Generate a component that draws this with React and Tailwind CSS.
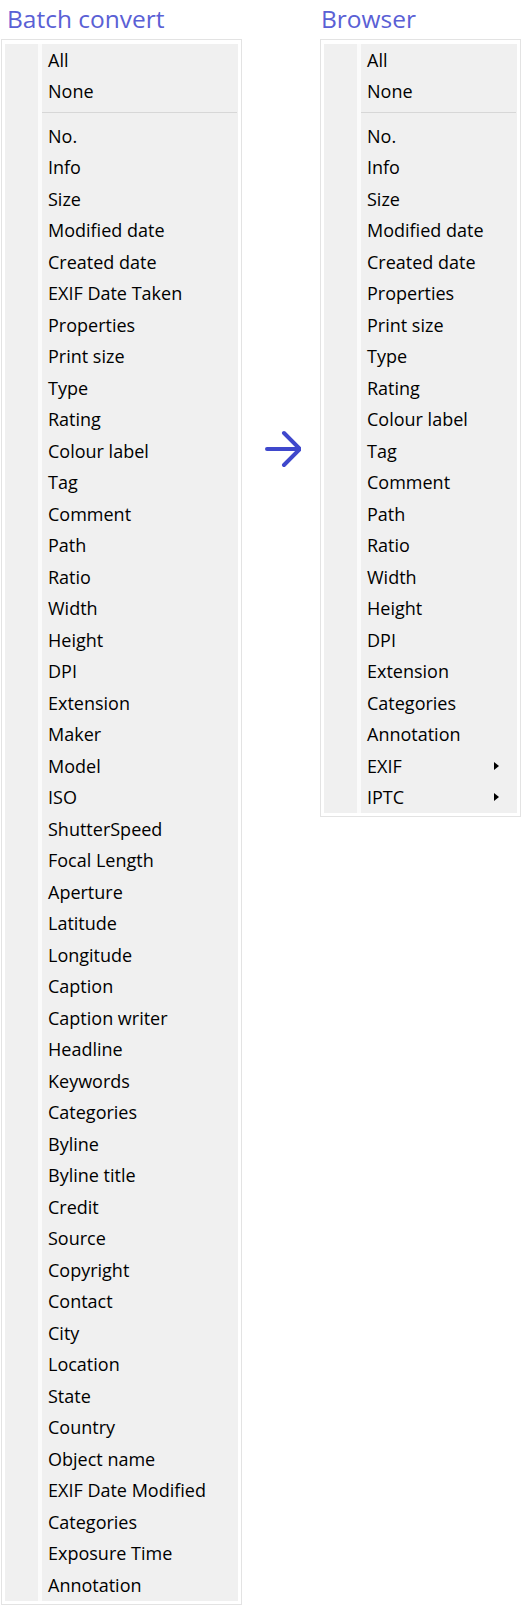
// Column chooser comparison: Batch convert vs Browser context menus

const batchItems = [
  'No.', 'Info', 'Size', 'Modified date', 'Created date', 'EXIF Date Taken',
  'Properties', 'Print size', 'Type', 'Rating', 'Colour label', 'Tag', 'Comment',
  'Path', 'Ratio', 'Width', 'Height', 'DPI', 'Extension', 'Maker', 'Model', 'ISO',
  'ShutterSpeed', 'Focal Length', 'Aperture', 'Latitude', 'Longitude', 'Caption',
  'Caption writer', 'Headline', 'Keywords', 'Categories', 'Byline', 'Byline title',
  'Credit', 'Source', 'Copyright', 'Contact', 'City', 'Location', 'State', 'Country',
  'Object name', 'EXIF Date Modified', 'Categories', 'Exposure Time', 'Annotation',
]

const browserItems = [
  'No.', 'Info', 'Size', 'Modified date', 'Created date', 'Properties', 'Print size',
  'Type', 'Rating', 'Colour label', 'Tag', 'Comment', 'Path', 'Ratio', 'Width',
  'Height', 'DPI', 'Extension', 'Categories', 'Annotation',
  { label: 'EXIF', sub: true },
  { label: 'IPTC', sub: true },
]

function MenuRow({ item }) {
  const label = typeof item === 'string' ? item : item.label
  const sub = typeof item !== 'string' && item.sub
  return (
    <div className="flex h-[31.5px] items-center justify-between pl-[6px] pr-[18px]">
      <span className="leading-none">{label}</span>
      {sub && (
        <span className="block h-0 w-0 border-y-[4.5px] border-l-[5px] border-y-transparent border-l-black" />
      )}
    </div>
  )
}

function Menu({ title, items, width, titlePad }) {
  return (
    <div className={width}>
      <div className={`h-[39px] pt-[4px] text-[24.5px] leading-[30px] text-[#5a60d5] ${titlePad}`}>
        {title}
      </div>
      <div className="border border-[#e3e3e3] bg-white pb-[3px] pl-[3px] pr-[3px] pt-[4px]">
        <div className="flex bg-[#f0f0f0]">
          {/* icon gutter */}
          <div className="w-[33px] shrink-0" />
          <div className="w-[4px] shrink-0 bg-[#fbfbfb]" />
          <div className="flex-1 text-[18px] text-black">
            <MenuRow item="All" />
            <MenuRow item="None" />
            <div className="pb-[7px] pt-[5px]">
              <div className="mr-px h-px bg-[#d7d7d7]" />
            </div>
            {items.map((item, i) => (
              <MenuRow key={i} item={item} />
            ))}
          </div>
        </div>
      </div>
    </div>
  )
}

export default function App() {
  return (
    <div
      className="flex w-[522px] items-start bg-white pl-px"
      style={{ fontFamily: '"Open Sans", "Noto Sans", sans-serif' }}
    >
      <Menu title="Batch convert" items={batchItems} width="w-[241px]" titlePad="pl-[6px]" />
      <div className="flex w-[78px] shrink-0 justify-center">
        <svg className="mt-[429px]" width="40" height="40" viewBox="0 0 40 40" fill="none">
          <path
            d="M6 20 H39 M23 4 L39 20 L23 36"
            stroke="#3f48cc"
            strokeWidth="4"
            strokeLinecap="round"
            strokeLinejoin="round"
          />
        </svg>
      </div>
      <Menu title="Browser" items={browserItems} width="w-[201px]" titlePad="pl-[1px]" />
    </div>
  )
}
